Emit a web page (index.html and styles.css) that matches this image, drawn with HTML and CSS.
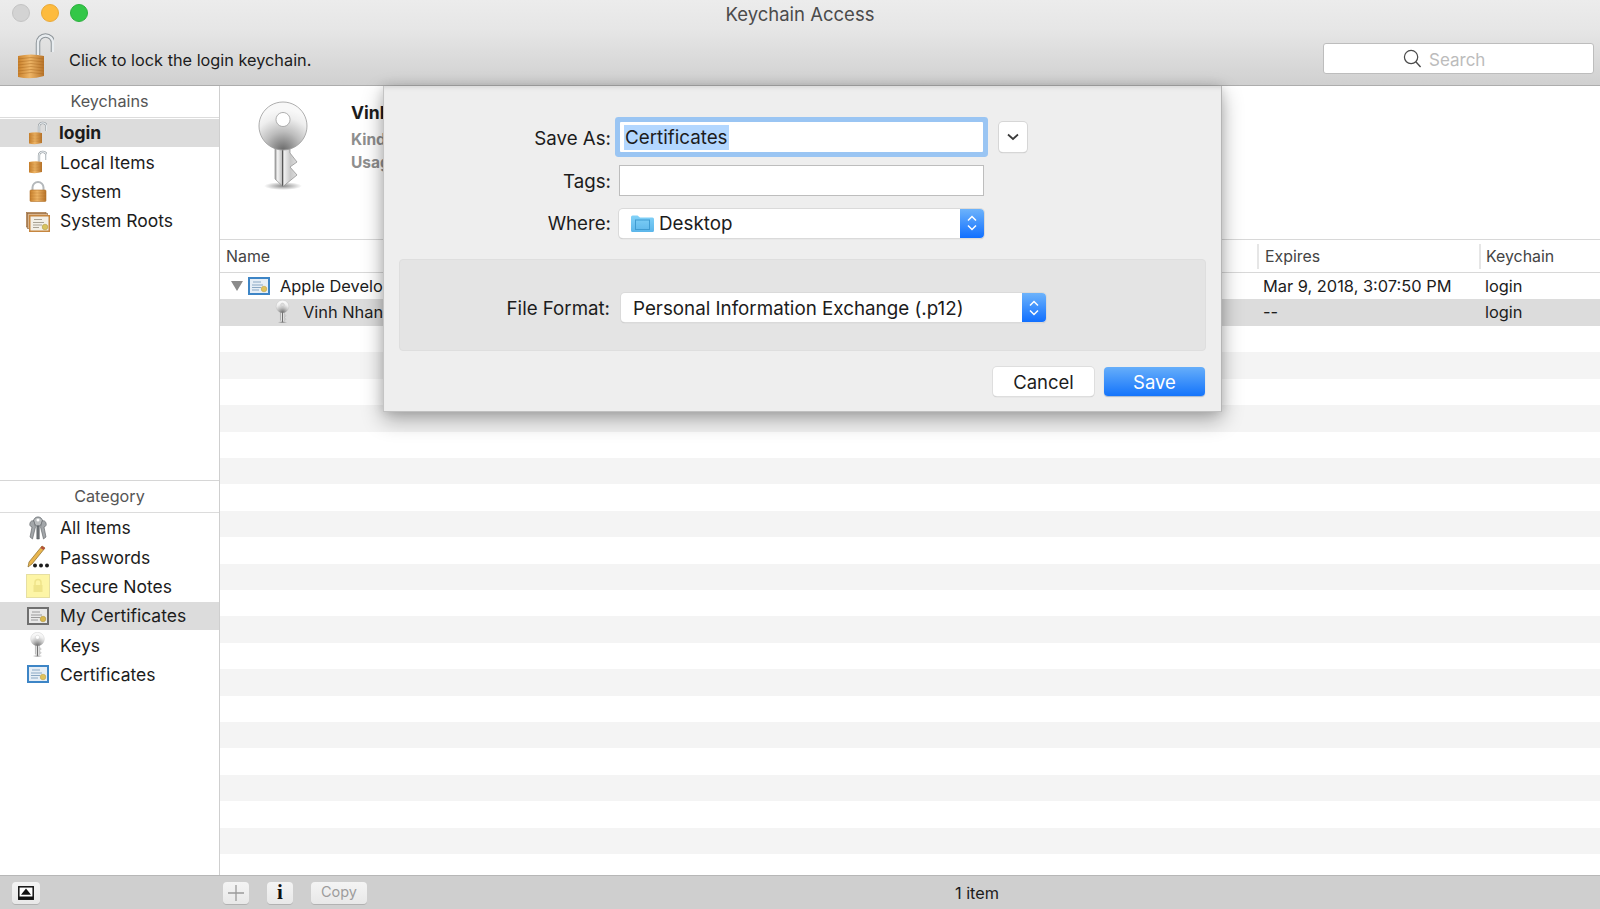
FILE: index.html
```html
<!DOCTYPE html>
<html lang="en">
<head>
<meta charset="utf-8">
<title>Keychain Access</title>
<link rel="stylesheet" href="styles.css">
</head>
<body>
<svg class="sprite" aria-hidden="true">
  <defs>
    <linearGradient id="gold" x1="0" y1="0" x2="1" y2="0"><stop offset="0" stop-color="#c9812c"/><stop offset=".45" stop-color="#eeb566"/><stop offset="1" stop-color="#b8742a"/></linearGradient>
    <radialGradient id="keyhead" cx=".5" cy="1" r=".85"><stop offset="0" stop-color="#6a6a6a"/><stop offset=".45" stop-color="#bdbdbd"/><stop offset=".8" stop-color="#eeeeee"/><stop offset="1" stop-color="#f8f8f8"/></radialGradient>
    <linearGradient id="keyshaft" x1="0" y1="0" x2="1" y2="0"><stop offset="0" stop-color="#9a9a9a"/><stop offset=".12" stop-color="#f4f4f4"/><stop offset=".3" stop-color="#c4c4c4"/><stop offset=".35" stop-color="#3e3e3e"/><stop offset=".4" stop-color="#f2f2f2"/><stop offset=".7" stop-color="#c8c8c8"/><stop offset="1" stop-color="#dedede"/></linearGradient>
    <radialGradient id="keyshadow"><stop offset="0" stop-color="#000" stop-opacity=".45"/><stop offset="1" stop-color="#000" stop-opacity="0"/></radialGradient>
    <linearGradient id="folderg" x1="0" y1="0" x2="0" y2="1"><stop offset="0" stop-color="#83d2f8"/><stop offset="1" stop-color="#5cb6ea"/></linearGradient>
    <symbol id="lock-open" viewBox="0 0 36 46">
      <path d="M20 22V10a7.500 7.500 0 0 1 15 0v9" fill="none" stroke="#8d9499" stroke-width="4.500"/>
      <path d="M20 22V10a7.500 7.500 0 0 1 15 0v9" fill="none" stroke="#e8ecef" stroke-width="2.500"/>
      <path d="M0 23q13-3 26 0v20q-13 4-26 1z" fill="url(#gold)"/>
      <path d="M0 26q13-3 26 0M0 29q13-3 26 0M0 32q13-3 26 0M0 35q13-3 26 0M0 38q13-3 26 0M0 41q13-3 26 0" fill="none" stroke="#a5661f" stroke-opacity=".55" stroke-width=".8"/>
    </symbol>
    <symbol id="lock-closed" viewBox="0 0 18 21">
      <path d="M3.500 10V6.500a5.500 5.500 0 0 1 11 0V10" fill="none" stroke="#b4b8bb" stroke-width="2"/>
      <rect x="1" y="9" width="16" height="11.500" rx="1" fill="url(#gold)" stroke="#b3742c" stroke-width=".6"/>
      <path d="M1 12h16M1 15h16M1 18h16" stroke="#a5661f" stroke-opacity=".35" stroke-width=".7"/>
    </symbol>
    <symbol id="cert" viewBox="0 0 22 18">
      <rect width="22" height="18" fill="#3d85c6"/>
      <rect x="2" y="2" width="18" height="14" fill="#e6eef6"/>
      <path d="M5 5h8M4 8h11M4 10.500h9M4 13h7" stroke="#8aa8c4" stroke-width="1"/>
      <circle cx="16" cy="12" r="2.800" fill="#e0c25c" stroke="#b99a3d" stroke-width=".5"/>
    </symbol>
    <symbol id="cert-gray" viewBox="0 0 22 18">
      <rect width="22" height="18" fill="#6f6f6f"/>
      <rect x="2" y="2" width="18" height="14" fill="#e9e9e9"/>
      <path d="M5 5h8M4 8h11M4 10.500h9M4 13h7" stroke="#9a9a9a" stroke-width="1"/>
      <circle cx="16" cy="12" r="2.800" fill="#d9b84f" stroke="#a98d38" stroke-width=".5"/>
    </symbol>
    <symbol id="cert-stack" viewBox="0 0 24 20">
      <rect x="0" y="0" width="20" height="15" fill="#c9a27a" stroke="#8a6238" stroke-width=".6"/>
      <rect x="1.500" y="1.500" width="20" height="15" fill="#d9b48c" stroke="#8a6238" stroke-width=".6"/>
      <rect x="3" y="3" width="21" height="17" fill="#c6863f"/>
      <rect x="4.500" y="4.500" width="18" height="14" fill="#f3efe6"/>
      <path d="M8 7.500h8M7 10.500h11M7 13h9M7 15.500h6" stroke="#a9a294" stroke-width="1"/>
      <circle cx="19" cy="15" r="2.800" fill="#d8c25c" stroke="#a6923d" stroke-width=".5"/>
    </symbol>
    <symbol id="key" viewBox="0 0 50 92">
      <ellipse cx="25" cy="85" rx="19" ry="4" fill="url(#keyshadow)"/>
      <path d="M17 42V78L25 85.500L39 74L32 66L39 61L32 52V42z" fill="url(#keyshaft)" stroke="#8a8a8a" stroke-width=".7"/>
      <path fill-rule="evenodd" d="M25 1a24 24 0 1 1-.01 0zM25 11.500a7 7 0 1 0 .01 0z" fill="url(#keyhead)" stroke="#9a9a9a" stroke-width=".8"/>
    </symbol>
    <symbol id="keys" viewBox="0 0 20 24">
      <circle cx="10" cy="5.500" r="4.500" fill="#b9bcbe" stroke="#70757a"/>
      <circle cx="10" cy="4" r="1.500" fill="#fff"/>
      <path d="M6 5a3 3 0 1 0-2 6l-2 10 2.500 2 3-12zM14 5a3 3 0 1 1 2 6l2 10-2.500 2-3-12z" fill="#a2a6a9" stroke="#5a5e62" stroke-width=".6"/>
      <path d="M8.800 10h2.500v13H8.800z" fill="#6f7478" stroke="#4c5054" stroke-width=".5"/>
    </symbol>
    <symbol id="pencil" viewBox="0 0 24 24">
      <path d="M16 1l3 2L6 19l-4 3 1-5z" fill="#e9b64f" stroke="#8b6b2a" stroke-width=".7"/>
      <path d="M16 1l3 2-1.500 2-3-2z" fill="#b5503c"/>
      <circle cx="9" cy="20.500" r="2" fill="#1d1d1d"/><circle cx="15" cy="20.500" r="2" fill="#1d1d1d"/><circle cx="21" cy="20.500" r="2" fill="#1d1d1d"/>
    </symbol>
    <symbol id="note" viewBox="0 0 24 24">
      <rect x=".5" y=".5" width="23" height="23" fill="#fdf5a6" stroke="#e6dfa2"/>
      <path d="M9 11V8.500a3 3 0 0 1 6 0V11" fill="none" stroke="#efe48a" stroke-width="1.500"/>
      <rect x="7.500" y="11" width="9" height="7" fill="#efe48a"/>
    </symbol>
    <symbol id="folder" viewBox="0 0 23 18">
      <path d="M0 3a1.500 1.500 0 0 1 1.500-1.500h5L9 3.500h12.500A1.500 1.500 0 0 1 23 5v11.500a1.500 1.500 0 0 1-1.500 1.500h-20A1.500 1.500 0 0 1 0 16.500z" fill="url(#folderg)"/>
      <rect x="4.500" y="6" width="14" height="9.500" fill="none" stroke="#3f9bd1" stroke-width="1"/>
    </symbol>
  </defs>
</svg>

<div class="app">
  <header class="toolbar">
    <div class="titlebar">
      <div class="lights">
        <span class="light light-grey"></span>
        <span class="light light-yellow"></span>
        <span class="light light-green"></span>
      </div>
      <div class="title">Keychain Access</div>
    </div>
    <div class="tools">
      <svg class="icon-lock"><use href="#lock-open"/></svg>
      <span class="lock-text">Click to lock the login keychain.</span>
      <div class="search">
        <svg class="search-icon" viewBox="0 0 20 20"><circle cx="8.500" cy="8.500" r="7" fill="none" stroke="#4a4a4a" stroke-width="1.300"/><path d="M13.500 13.500L18.500 19" stroke="#4a4a4a" stroke-width="1.500"/></svg>
        <span class="search-text">Search</span>
      </div>
    </div>
  </header>

  <div class="body">
    <aside class="sidebar">
      <section class="side-top">
        <div class="side-head">Keychains</div>
        <div class="side-row selected strong"><svg class="ic ic-lock"><use href="#lock-open"/></svg><span>login</span></div>
        <div class="side-row"><svg class="ic ic-lock"><use href="#lock-open"/></svg><span>Local Items</span></div>
        <div class="side-row"><svg class="ic ic-closed"><use href="#lock-closed"/></svg><span>System</span></div>
        <div class="side-row"><svg class="ic ic-stack"><use href="#cert-stack"/></svg><span>System Roots</span></div>
      </section>
      <section class="side-bottom">
        <div class="side-head side-head-cat">Category</div>
        <div class="side-row"><svg class="ic ic-keys"><use href="#keys"/></svg><span>All Items</span></div>
        <div class="side-row"><svg class="ic ic-pencil"><use href="#pencil"/></svg><span>Passwords</span></div>
        <div class="side-row"><svg class="ic ic-note"><use href="#note"/></svg><span>Secure Notes</span></div>
        <div class="side-row selected"><svg class="ic ic-cert"><use href="#cert-gray"/></svg><span>My Certificates</span></div>
        <div class="side-row"><svg class="ic ic-key"><use href="#key"/></svg><span>Keys</span></div>
        <div class="side-row"><svg class="ic ic-cert"><use href="#cert"/></svg><span>Certificates</span></div>
      </section>
    </aside>

    <main class="main">
      <div class="detail">
        <svg class="big-key"><use href="#key"/></svg>
        <div class="detail-text">
          <div class="detail-name">Vinh</div>
          <div class="detail-meta">Kind</div>
          <div class="detail-meta">Usage</div>
        </div>
      </div>
      <div class="tr thead">
        <div class="td td-name">Name</div>
        <div class="td td-sep">Expires</div>
        <div class="td td-sep td-sep-last">Keychain</div>
      </div>
      <div class="tr row">
        <div class="td td-tree">
          <span class="twisty"></span>
          <svg class="row-cert"><use href="#cert"/></svg>
          <span>Apple Development</span>
        </div>
        <div class="td td-val">Mar 9, 2018, 3:07:50 PM</div>
        <div class="td td-val">login</div>
      </div>
      <div class="tr row row-selected">
        <div class="td td-tree td-child">
          <svg class="row-key"><use href="#key"/></svg>
          <span>Vinh Nhan</span>
        </div>
        <div class="td td-val">--</div>
        <div class="td td-val">login</div>
      </div>
      <div class="stripes"></div>
    </main>
  </div>

  <footer class="bottom">
    <div class="bottom-left">
      <button class="tbtn tbtn-show" type="button"><svg viewBox="0 0 16 14" class="show-icon"><rect x=".8" y=".8" width="14.400" height="12.400" fill="#fff" stroke="#111" stroke-width="1.500"/><rect x=".8" y="10.500" width="14.400" height="2.700" fill="#111"/><path d="M8 2.500L13 8.800H3z" fill="#111"/></svg></button>
    </div>
    <div class="bottom-right">
      <button class="tbtn tbtn-sq" type="button"><svg viewBox="0 0 16 16" class="plus-icon"><path d="M8 0v16M0 8h16" stroke="#9a9a9a" stroke-width="1.300"/></svg></button>
      <button class="tbtn tbtn-sq tbtn-i" type="button">i</button>
      <button class="tbtn tbtn-copy" type="button">Copy</button>
      <div class="status">1 item</div>
    </div>
  </footer>

  <div class="sheet">
    <div class="form">
      <label class="lbl lbl-low">Save As:</label>
      <div class="field field-focus"><span class="sel-text">Certificates</span></div>
      <button class="chev" type="button"><svg viewBox="0 0 12 8" class="chev-icon"><path d="M1 1.500L6 6l5-4.500" fill="none" stroke="#3a3a3a" stroke-width="1.700"/></svg></button>
      <label class="lbl lbl-low">Tags:</label>
      <div class="field field-tags"></div>
      <span></span>
      <label class="lbl">Where:</label>
      <div class="popup popup-where">
        <svg class="folder-icon"><use href="#folder"/></svg>
        <span class="popup-text">Desktop</span>
        <span class="stepper"><svg viewBox="0 0 12 20" class="step-icon"><path d="M2 7.500L6 3.500l4 4M2 12.500l4 4 4-4" fill="none" stroke="#fff" stroke-width="1.500"/></svg></span>
      </div>
      <span></span>
    </div>
    <div class="accessory">
      <label class="lbl lbl-format">File Format:</label>
      <div class="popup popup-format">
        <span class="popup-text">Personal Information Exchange (.p12)</span>
        <span class="stepper"><svg viewBox="0 0 12 20" class="step-icon"><path d="M2 7.500L6 3.500l4 4M2 12.500l4 4 4-4" fill="none" stroke="#fff" stroke-width="1.500"/></svg></span>
      </div>
    </div>
    <div class="actions">
      <button class="btn" type="button">Cancel</button>
      <button class="btn btn-primary" type="button">Save</button>
    </div>
  </div>
</div>
</body>
</html>
```

FILE: styles.css
```css
* { box-sizing: border-box; }
html, body { margin: 0; height: 100%; }
body {
  font-family: Inter, "Liberation Sans", sans-serif;
  color: #1c1c1c;
  overflow: hidden;
  background: #fff;
}
.sprite { width: 0; height: 0; display: block; overflow: hidden; }
.app {
  position: relative;
  width: 1600px;
  height: 909px;
  display: flex;
  flex-direction: column;
}
svg { display: block; flex: none; }

/* toolbar */
.toolbar {
  height: 86px;
  flex: none;
  background: linear-gradient(#ececec, #e6e6e6 35%, #d0d0d0);
  border-bottom: 1px solid #adadad;
}
.titlebar {
  height: 28px;
  display: grid;
  grid-template-columns: 1fr auto 1fr;
  align-items: center;
}
.lights { display: flex; gap: 11px; padding-left: 12px; margin-top: -2px; }
.light { width: 18px; height: 18px; border-radius: 50%; }
.light-grey { background: #d3d3d3; border: 1px solid #c4c4c4; }
.light-yellow { background: #fdbb3e; border: 1px solid #eaa938; }
.light-green { background: #33c748; border: 1px solid #2bb03e; }
.title { font-size: 18.500px; color: #4b4b4b; margin-top: -1px; }
.tools { height: 57px; display: flex; align-items: center; padding: 0 6px 0 18px; }
.icon-lock { width: 36px; height: 46px; margin-top: -1px; }
.lock-text { font-size: 16.300px; margin-left: 15px; margin-top: 7px; }
.search {
  margin-left: auto;
  margin-top: 3px;
  width: 271px;
  height: 31px;
  background: #fff;
  border: 1px solid #bdbdbd;
  border-radius: 3px;
  display: flex;
  align-items: center;
  padding-left: 79px;
}
.search-icon { width: 19px; height: 19px; }
.search-text { font-size: 17px; color: #bcbcbc; margin-left: 7px; margin-top: 3px; }

/* body */
.body { flex: 1; display: flex; min-height: 0; }
.sidebar {
  width: 220px;
  flex: none;
  border-right: 1px solid #cfcfcf;
  display: flex;
  flex-direction: column;
}
.side-top { height: 394px; flex: none; }
.side-bottom { flex: 1; border-top: 1px solid #d6d6d6; }
.side-head {
  height: 32px;
  border-bottom: 1px solid #dcdcdc;
  text-align: center;
  font-size: 16.200px;
  color: #555;
  line-height: 30px;
  margin-bottom: .5px;
}
.side-head-cat { line-height: 31px; }
.side-row {
  height: 28.700px;
  margin-bottom: .7px;
  display: flex;
  align-items: center;
  font-size: 17.500px;
  position: relative;
  padding-left: 60px;
}
.side-row.selected { background: #dcdcdc; }
.strong { font-weight: 700; padding-left: 59px; }
.ic { position: absolute; }
.ic-lock { width: 18px; height: 24px; left: 29px; top: 2px; }
.ic-closed { width: 18px; height: 21px; left: 29px; top: 4px; }
.ic-stack { width: 24px; height: 20px; left: 26px; top: 5px; }
.ic-keys { width: 20px; height: 24px; left: 28px; top: 2px; }
.ic-pencil { width: 24px; height: 24px; left: 26px; top: 2px; }
.ic-note { width: 24px; height: 24px; left: 26px; top: 2px; }
.ic-cert { width: 22px; height: 18px; left: 27px; top: 5px; }
.ic-key { width: 15px; height: 26px; left: 30px; top: 1px; }

/* main */
.main { flex: 1; min-width: 0; display: flex; flex-direction: column; }
.detail {
  height: 154px;
  flex: none;
  padding: 15px 0 0 38px;
  display: flex;
  border-bottom: 1px solid #d8d8d8;
}
.big-key { width: 50px; height: 92px; }
.detail-text { margin-left: 43px; }
.detail-name { font-size: 17.500px; font-weight: 700; line-height: 24px; margin-bottom: 3px; }
.detail-meta { font-size: 15.500px; font-weight: 700; color: #8e8e8e; line-height: 23px; }
.tr { display: grid; grid-template-columns: 1037px 222px 1fr; }
.thead { height: 33px; border-bottom: 1px solid #d8d8d8; font-size: 15.900px; color: #444; align-items: center; }
.td-name { padding-left: 6px; }
.td-sep { padding-left: 6px; border-left: 2px solid #e6e6e6; height: 25px; line-height: 25px; }
.td-sep-last { padding-left: 5px; }
.row { height: 26.400px; font-size: 16.400px; align-items: center; }
.row-selected { background: #dcdcdc; padding-bottom: 1px; }
.td-tree { display: flex; align-items: center; padding-left: 11px; white-space: nowrap; }
.td-child { padding-left: 55px; }
.twisty {
  width: 0; height: 0;
  border-left: 6.500px solid transparent;
  border-right: 6.500px solid transparent;
  border-top: 10px solid #8b8b8b;
  margin-right: 5px;
}
.row-cert { width: 22px; height: 18px; margin-right: 10px; }
.row-key { width: 15px; height: 24px; margin-right: 13px; }
.td-val { padding-left: 6px; }
.stripes {
  flex: 1;
  background: repeating-linear-gradient(#fff 0, #fff 26.400px, #f4f4f4 26.400px, #f4f4f4 52.800px);
}

/* bottom */
.bottom {
  height: 34px;
  flex: none;
  background: #cfcfcf;
  border-top: 1px solid #b7b7b7;
  display: flex;
  align-items: center;
}
.bottom-left { width: 220px; padding-left: 12px; }
.bottom-right { flex: 1; display: flex; align-items: center; padding-left: 3px; gap: 18px; }
.tbtn {
  height: 22px;
  border: 0;
  border-radius: 4px;
  background: linear-gradient(#f4f4f4, #e8e8e8);
  box-shadow: 0 1px 0 #b2b2b2;
  padding: 0;
  display: flex;
  align-items: center;
  justify-content: center;
  font-family: inherit;
}
.tbtn-show { width: 28px; }
.show-icon { width: 16px; height: 14px; }
.tbtn-sq { width: 26px; }
.plus-icon { width: 16px; height: 16px; }
.tbtn-i { font-family: "Liberation Serif", serif; font-size: 21px; font-weight: 700; color: #111; }
.tbtn-copy { width: 56px; font-size: 14.500px; color: #9c9c9c; padding-bottom: 2px; }
.status { flex: 1; text-align: center; font-size: 16.300px; padding-right: 31px; }

/* save sheet */
.sheet {
  position: absolute;
  left: 383px;
  top: 86px;
  width: 839px;
  height: 326px;
  background: #eeeeee;
  border-left: 1px solid #c4c4c4;
  border-right: 1px solid #b5b5b5;
  border-bottom: 1px solid #c0c0c0;
  box-shadow: 0 8px 20px rgba(0, 0, 0, .32), 0 0 10px rgba(0, 0, 0, .12), inset 0 5px 5px -4px rgba(0, 0, 0, .12);
  padding: 36px 15px 0 15px;
  display: flex;
  flex-direction: column;
}
.form {
  display: grid;
  grid-template-columns: 212px 365px auto;
  grid-template-rows: 30px 31px 29px;
  column-gap: 8px;
  row-gap: 13px;
  align-items: center;
  justify-content: start;
}
.lbl { font-size: 18.700px; color: #1c1c1c; text-align: right; white-space: nowrap; }
.lbl-low { padding-top: 2px; }
.field { height: 100%; background: #fff; border: 1px solid #bdbdbd; display: flex; align-items: center; }
.field-focus {
  border: 0;
  box-shadow: 0 0 0 5px #9ac5f3;
  border-radius: 1px;
  padding-left: 4px;
  margin: 0 1px;
}
.sel-text { background: #b3d7ff; font-size: 18.800px; line-height: 25px; padding: 0 1px; margin-top: 1px; }
.chev {
  width: 28px;
  height: 30px;
  margin-left: 7px;
  background: #fff;
  border: 0;
  border-radius: 4px;
  box-shadow: 0 0 0 1px #d6d6d6, 0 1px 1px #b5b5b5;
  display: flex;
  align-items: center;
  justify-content: center;
  padding: 0;
}
.chev-icon { width: 12px; height: 8px; }
.popup {
  position: relative;
  height: 29px;
  background: #fff;
  border-radius: 4px;
  box-shadow: 0 0 0 1px #dadada, 0 1px 1px #b5b5b5;
  display: flex;
  align-items: center;
  overflow: hidden;
}
.popup-where { padding-left: 12px; margin-top: -1px; }
.folder-icon { width: 23px; height: 18px; margin-right: 5px; }
.popup-text { font-size: 18.800px; }
.popup-format { width: 425px; padding-left: 12px; }
.popup-format .popup-text { padding-top: 1px; }
.stepper {
  margin-left: auto;
  width: 24px;
  height: 100%;
  background: linear-gradient(#6db3fb, #106fff);
  display: flex;
  align-items: center;
  justify-content: center;
}
.step-icon { width: 12px; height: 20px; }
.accessory {
  margin-top: 21px;
  height: 92px;
  background: #e4e4e4;
  border: 1px solid #dedede;
  border-radius: 4px;
  display: flex;
  align-items: center;
  padding: 5px 0 0 105px;
  gap: 11px;
}
.lbl-format { width: 105px; padding-top: 1px; }
.actions { margin: 16px 1px 0 0; display: flex; justify-content: flex-end; gap: 10px; }
.btn {
  width: 101px;
  height: 29px;
  border: 0;
  border-radius: 4px;
  background: #fff;
  box-shadow: 0 0 0 1px #dedede, 0 1px 1px #b0b0b0;
  font-family: inherit;
  font-size: 18.500px;
  color: #1c1c1c;
  padding: 0;
}
.btn-primary {
  background: linear-gradient(#66aefa, #1474fb);
  box-shadow: 0 1px 1px #a8b8cc;
  color: #fff;
}
```
